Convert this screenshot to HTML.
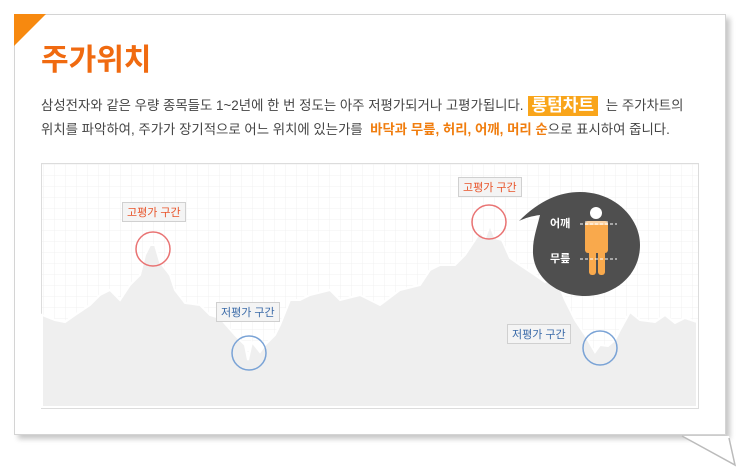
<!DOCTYPE html>
<html><head><meta charset="utf-8">
<style>
*{margin:0;padding:0;box-sizing:border-box}
body{width:741px;height:473px;background:#fff;position:relative;overflow:hidden;font-family:"Liberation Sans","Noto Sans CJK KR",sans-serif}
.card{position:absolute;left:14px;top:14px;width:712px;height:421px;border:1px solid #d4d4d4;background:#fff;box-shadow:4px 4px 5px rgba(0,0,0,.22)}
.title{position:absolute;left:41px;top:35px;font-size:30px;font-weight:bold;color:#f06a10;letter-spacing:0}
.p{position:absolute;left:41px;font-size:13.4px;line-height:20px;height:20px;color:#444;white-space:nowrap}
.hl{background:#f9a51a;color:#fff;font-size:17px;font-weight:bold;padding:0 4px;margin:0 4px;line-height:20px;display:inline-block;vertical-align:top}
.or{color:#f07d0e;font-weight:bold}
.lbl{position:absolute;background:#f4f4f4;border:1px solid #d0d0d0;font-size:11px;padding:1px 4px;white-space:nowrap}
</style></head><body>
<div class="card"></div>
<svg style="position:absolute;left:0;top:0" width="741" height="473">
<polygon points="14,14 46,14 14,46" fill="#f7890f"/>
<polygon points="682,436 729,436 735,465" fill="#fff"/>
<polyline points="682,436 735,465 729,438" fill="none" stroke="#bbb" stroke-width="1.5"/>
<defs><pattern id="g" width="11" height="11" patternUnits="userSpaceOnUse"><path d="M11 0V11H0" fill="none" stroke="#f0f0f0"/></pattern></defs>
<rect x="41.5" y="163.5" width="657" height="245" fill="#fff" stroke="#dcdcdc"/>
<rect x="42" y="164" width="656" height="244" fill="url(#g)"/>
<polygon fill="#efefef" stroke="#fff" stroke-width="2" points="42,315 55,320 65,322 75,315 90,305 100,295 110,290 120,300 130,285 140,275 145,255 150,245 155,245 160,262 170,275 175,290 185,303 200,305 210,315 220,318 235,335 245,345 248,360 252,342 260,352 265,345 275,335 280,325 290,300 300,300 310,295 330,290 340,300 360,295 380,305 400,290 420,285 430,270 440,265 455,265 465,255 475,240 480,232 485,238 490,225 495,238 502,240 510,258 520,265 535,275 545,282 555,275 565,300 575,320 585,335 595,352 600,345 608,346 615,340 620,330 630,312 640,320 655,322 665,315 675,323 685,318 697,322 697,407 42,407"/>
<circle cx="153" cy="249" r="17" fill="none" stroke="#e97373" stroke-width="1.5"/>
<circle cx="249" cy="353" r="17" fill="none" stroke="#7aa3d6" stroke-width="1.5"/>
<circle cx="489" cy="222" r="17" fill="none" stroke="#e97373" stroke-width="1.5"/>
<circle cx="600" cy="348" r="17" fill="none" stroke="#7aa3d6" stroke-width="1.5"/>
<path d="M519,221 C540,200 560,192 580,192 C615,192 640,218 640,245 C640,275 615,296 585,296 C555,296 532,275 533,250 C533,238 537,228 540,215 C532,216 525,218 519,221Z" fill="#4f4f4f"/>
<circle cx="596" cy="213" r="6" fill="#fff"/>
<rect x="585" y="221" width="23" height="32" rx="3" fill="#f9a94c"/>
<rect x="589" y="245" width="7" height="30" rx="3" fill="#f9a94c"/>
<rect x="598" y="245" width="7" height="30" rx="3" fill="#f9a94c"/>
<rect x="585" y="221" width="23" height="4" fill="#fff" opacity=".5"/>
<line x1="580" y1="224" x2="617" y2="224" stroke="#fff" stroke-dasharray="3,2"/>
<line x1="580" y1="259" x2="617" y2="259" stroke="#fff" stroke-dasharray="3,2"/>
<text x="550" y="227" fill="#fff" font-size="11" font-weight="bold" font-family="Liberation Sans,Noto Sans CJK KR,sans-serif">어깨</text>
<text x="550" y="262" fill="#fff" font-size="11" font-weight="bold" font-family="Liberation Sans,Noto Sans CJK KR,sans-serif">무릎</text>
</svg>
<div class="title">주가위치</div>
<div class="p" style="top:96px">삼성전자와 같은 우량 종목들도 1~2년에 한 번 정도는 아주 저평가되거나 고평가됩니다.<span class="hl">롱텀차트</span> 는 주가차트의</div>
<div class="p" style="top:120px">위치를 파악하여, 주가가 장기적으로 어느 위치에 있는가를 &nbsp;<span class="or">바닥과 무릎, 허리, 어깨, 머리 순</span>으로 표시하여 줍니다.</div>
<div class="lbl" style="left:122px;top:202px;color:#e8542a">고평가 구간</div>
<div class="lbl" style="left:458px;top:177px;color:#e8542a">고평가 구간</div>
<div class="lbl" style="left:216px;top:302px;color:#3a6aa8">저평가 구간</div>
<div class="lbl" style="left:507px;top:324px;color:#3a6aa8">저평가 구간</div>
</body></html>
